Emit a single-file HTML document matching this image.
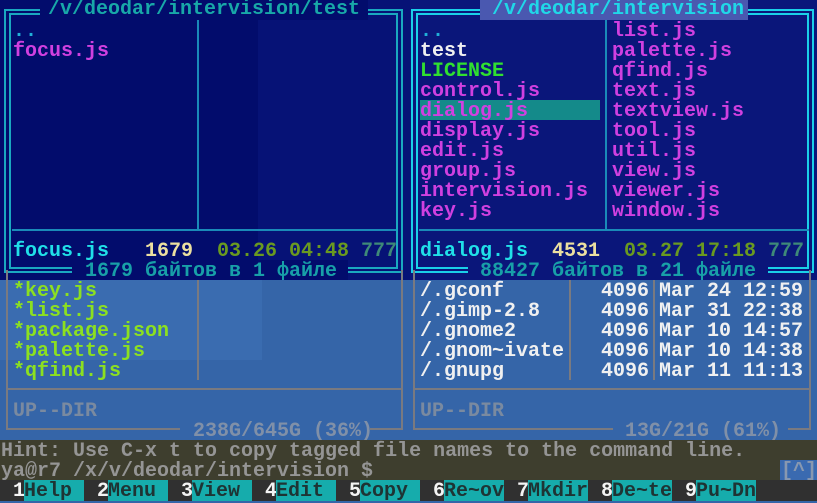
<!DOCTYPE html>
<html><head><meta charset="utf-8"><style>
*{margin:0;padding:0;box-sizing:border-box}
body{width:817px;height:501px;overflow:hidden;position:relative;background:#3565a8;font-family:"Liberation Mono",monospace;font-weight:bold;font-size:20px;line-height:20px}
.a{position:absolute;white-space:pre;padding-top:2px}
.b{position:absolute}
.k{position:absolute;top:480px;height:21px;width:60px;background:#16acac;color:#1e3434;padding-top:2px;white-space:pre}
.d{position:absolute;top:480px;color:#f4f4f4;padding-top:2px}
</style></head><body>
<!-- top region -->
<div class="b" style="left:0;top:0;width:817px;height:280px;background:#020c6c"></div>
<div class="b" style="left:258px;top:0;width:152px;height:280px;background:#061276"></div>
<div class="b" style="left:410px;top:0;width:407px;height:280px;background:#0a167a"></div>
<!-- left panel borders -->
<div class="b" style="left:4px;top:9px;width:399px;height:264px;border:2px solid #1aa8c0"></div>
<div class="b" style="left:9px;top:13px;width:389px;height:256px;border:2px solid #1aa8c0"></div>
<div class="b" style="left:40px;top:0;width:328px;height:20px;background:#020c6c"></div>
<div class="a" style="left:48px;top:0;color:#18a8a8;padding-top:0">/v/deodar/intervision/test</div>
<div class="b" style="left:197px;top:20px;width:2px;height:210px;background:#1a8ab8"></div>
<div class="b" style="left:12px;top:229px;width:384px;height:2px;background:#1a8ab8"></div>
<div class="b" style="left:72px;top:260px;width:276px;height:20px;background:#020c6c"></div>
<div class="a" style="left:85px;top:260px;color:#18a0a8">1679 байтов в 1 файле</div>
<div class="a" style="left:13px;top:20px;color:#20b0d8">..</div>
<div class="a" style="left:13px;top:40px;color:#d040e0">focus.js</div>
<div class="a" style="left:13px;top:240px;color:#20e0e8">focus.js</div>
<div class="a" style="left:145px;top:240px;color:#ece0a0">1679</div>
<div class="a" style="left:217px;top:240px;color:#6a9a20">03.26 04:48</div>
<div class="a" style="left:361px;top:240px;color:#3e8a78">777</div>
<!-- right panel -->
<div class="b" style="left:411px;top:9px;width:403px;height:264px;border:2px solid #1ad0e8"></div>
<div class="b" style="left:416px;top:13px;width:393px;height:256px;border:2px solid #1ad0e8"></div>
<div class="b" style="left:480px;top:0;width:268px;height:20px;background:#4a58b0"></div>
<div class="a" style="left:492px;top:0;color:#20d8e8;padding-top:0">/v/deodar/intervision</div>
<div class="b" style="left:605px;top:20px;width:2px;height:210px;background:#1a8ab8"></div>
<div class="b" style="left:419px;top:229px;width:390px;height:2px;background:#1a8ab8"></div>
<div class="b" style="left:468px;top:260px;width:300px;height:20px;background:#0a167a"></div>
<div class="a" style="left:480px;top:260px;color:#18a0a8">88427 байтов в 21 файле</div>
<div class="b" style="left:420px;top:100px;width:180px;height:20px;background:#148a8a"></div>
<div class="a" style="left:420px;top:20px;color:#20b0d8">..</div>
<div class="a" style="left:420px;top:40px;color:#f0f0f0">test</div>
<div class="a" style="left:420px;top:60px;color:#30e030">LICENSE</div>
<div class="a" style="left:420px;top:80px;color:#d040e0">control.js
dialog.js
display.js
edit.js
group.js
intervision.js
key.js</div>
<div class="a" style="left:612px;top:20px;color:#d040e0">list.js
palette.js
qfind.js
text.js
textview.js
tool.js
util.js
view.js
viewer.js
window.js</div>
<div class="a" style="left:420px;top:240px;color:#20e0e8">dialog.js</div>
<div class="a" style="left:552px;top:240px;color:#ece0a0">4531</div>
<div class="a" style="left:624px;top:240px;color:#6a9a20">03.27 17:18</div>
<div class="a" style="left:768px;top:240px;color:#3e8a78">777</div>
<!-- lower region -->
<div class="b" style="left:0;top:280px;width:262px;height:80px;background:#3a6cb0"></div>
<div class="b" style="left:6px;top:270px;width:397px;height:160px;border:2px solid #7a7a80;border-top:none"></div>
<div class="b" style="left:197px;top:280px;width:2px;height:100px;background:#7a7a80"></div>
<div class="b" style="left:6px;top:388px;width:397px;height:2px;background:#7a7a80"></div>
<div class="b" style="left:180px;top:420px;width:190px;height:20px;background:#3565a8"></div>
<div class="a" style="left:13px;top:280px;color:#8ce020">*key.js
*list.js
*package.json
*palette.js
*qfind.js</div>
<div class="a" style="left:13px;top:400px;color:#7a8aa0">UP--DIR</div>
<div class="a" style="left:193px;top:420px;color:#8090a8">238G/645G (36%)</div>
<div class="b" style="left:413px;top:270px;width:398px;height:160px;border:2px solid #7a7a80;border-top:none"></div>
<div class="b" style="left:569px;top:280px;width:2px;height:100px;background:#7a7a80"></div>
<div class="b" style="left:653px;top:280px;width:2px;height:100px;background:#7a7a80"></div>
<div class="b" style="left:413px;top:388px;width:398px;height:2px;background:#7a7a80"></div>
<div class="b" style="left:613px;top:420px;width:175px;height:20px;background:#3565a8"></div>
<div class="a" style="left:420px;top:280px;color:#f0f0f0">/.gconf
/.gimp-2.8
/.gnome2
/.gnom~ivate
/.gnupg</div>
<div class="a" style="left:601px;top:280px;color:#f0f0f0">4096
4096
4096
4096
4096</div>
<div class="a" style="left:659px;top:280px;color:#f0f0f0">Mar 24 12:59
Mar 31 22:38
Mar 10 14:57
Mar 10 14:38
Mar 11 11:13</div>
<div class="a" style="left:420px;top:400px;color:#7a8aa0">UP--DIR</div>
<div class="a" style="left:625px;top:420px;color:#8090a8">13G/21G (61%)</div>
<!-- hint / prompt -->
<div class="b" style="left:0;top:440px;width:817px;height:40px;background:#3e3e2e"></div>
<div class="a" style="left:1px;top:440px;color:#959595">Hint: Use C-x t to copy tagged file names to the command line.</div>
<div class="a" style="left:1px;top:460px;color:#959595">ya@r7 /x/v/deodar/intervision $</div>
<div class="b" style="left:780px;top:460px;width:37px;height:20px;background:#3a6ab0"></div>
<div class="a" style="left:781px;top:460px;color:#8898b0">[^]</div>
<!-- function keys -->
<div class="b" style="left:0;top:480px;width:817px;height:21px;background:#303030"></div>
<div class="d" style="left:13px">1</div><div class="k" style="left:24px">Help</div>
<div class="d" style="left:97px">2</div><div class="k" style="left:108px">Menu</div>
<div class="d" style="left:181px">3</div><div class="k" style="left:192px">View</div>
<div class="d" style="left:265px">4</div><div class="k" style="left:276px">Edit</div>
<div class="d" style="left:349px">5</div><div class="k" style="left:360px">Copy</div>
<div class="d" style="left:433px">6</div><div class="k" style="left:444px">Re~ov</div>
<div class="d" style="left:517px">7</div><div class="k" style="left:528px">Mkdir</div>
<div class="d" style="left:601px">8</div><div class="k" style="left:612px">De~te</div>
<div class="d" style="left:685px">9</div><div class="k" style="left:696px">Pu~Dn</div>
</body></html>
